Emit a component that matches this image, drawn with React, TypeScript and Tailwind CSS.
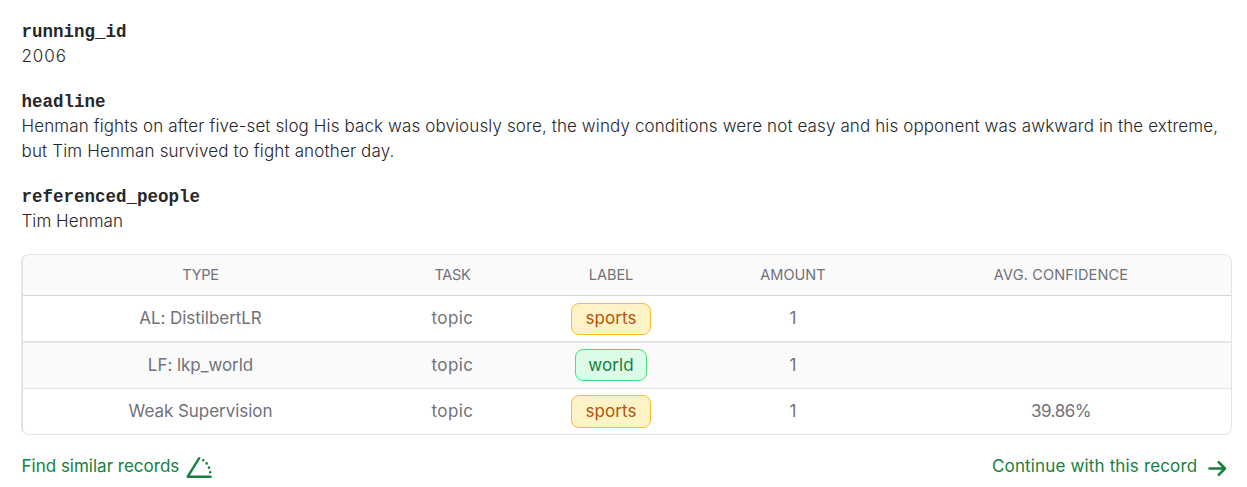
import React from 'react';

interface Field {
  name: string;
  lines: { text: string; className: string }[];
}

interface Row {
  type: string;
  label: string;
  labelClass: string;
  confidence?: string;
  rowClass: string;
}

const fields: Field[] = [
  { name: 'running_id', lines: [{ text: '2006', className: 'tracking-[0.9px]' }] },
  {
    name: 'headline',
    lines: [
      {
        text: 'Henman fights on after five-set slog His back was obviously sore, the windy conditions were not easy and his opponent was awkward in the extreme,',
        className: 'tracking-[0.115px]',
      },
      { text: 'but Tim Henman survived to fight another day.', className: 'tracking-[0.15px]' },
    ],
  },
  { name: 'referenced_people', lines: [{ text: 'Tim Henman', className: 'tracking-[0.05px]' }] },
];

const rows: Row[] = [
  {
    type: 'AL: DistilbertLR',
    label: 'sports',
    labelClass: 'h-8 w-20 border-[#fbbf24] bg-[#fef3c7] text-[#b45309]',
    rowClass: 'h-[47px] border-b-2 bg-white',
  },
  {
    type: 'LF: lkp_world',
    label: 'world',
    labelClass: 'mb-px h-8 w-[72px] border-[#4ade80] bg-[#dcfce7] text-[#15803d]',
    rowClass: 'h-[46px] border-b bg-[#fafafa]',
  },
  {
    type: 'Weak Supervision',
    label: 'sports',
    labelClass: 'h-[33px] w-20 border-[#fbbf24] bg-[#fef3c7] text-[#b45309]',
    confidence: '39.86%',
    rowClass: 'h-[45px] bg-white',
  },
];

const columns = 'grid grid-cols-[355px_149px_168px_196px_340px] items-center justify-items-center';

const App: React.FC = () => {
  return (
    <div className="h-[487px] w-[1247px] overflow-hidden bg-white pt-[19px] pr-[15px] pl-[21px] font-['Inter',sans-serif] text-[17px] leading-[25px] font-light text-[#27272a]">
      {fields.map((field) => (
        <div key={field.name} className="mb-5 pl-[0.5px]">
          <div className="h-[25px] pt-px font-['Liberation_Mono',monospace] text-[17.5px] leading-[25px] font-bold">{field.name}</div>
          {field.lines.map((line) => (
            <p key={line.text} className={`whitespace-nowrap ${line.className}`}>{line.text}</p>
          ))}
        </div>
      ))}

      <div className="overflow-hidden rounded-lg border border-l-2 border-[#e4e4e7] font-normal text-[#71717a]">
        <div className={`${columns} h-[41px] border-b border-[#d4d4d8] bg-[#fafafa] pb-[2px] text-[14.5px]`}>
          <span className="-tracking-[0.3px]">TYPE</span>
          <span className="-tracking-[0.3px]">TASK</span>
          <span>LABEL</span>
          <span>AMOUNT</span>
          <span className="tracking-[0.15px]">AVG. CONFIDENCE</span>
        </div>
        {rows.map((row) => (
          <div key={row.type} className={`${columns} border-[#e4e4e7] ${row.rowClass}`}>
            <span className="-tracking-[0.05px]">{row.type}</span>
            <span className="tracking-[0.4px]">topic</span>
            <span className={`flex items-center justify-center rounded-lg border tracking-[0.1px] ${row.labelClass}`}>{row.label}</span>
            <span>1</span>
            <span className="-tracking-[0.45px]">{row.confidence}</span>
          </div>
        ))}
      </div>

      <div className="mt-[19px] flex items-center justify-between font-normal text-[#15803d]">
        <a className="flex items-center">
          <span className="w-[165px] pl-[0.5px] whitespace-nowrap">Find similar records</span>
          <svg className="h-[25px] w-[26px]" viewBox="0 0 26 25" fill="none" stroke="currentColor" strokeWidth="2.4" strokeLinecap="round" strokeLinejoin="round">
            <path d="M13.2 4.2L1.7 22.7H24.6" />
            <path d="M17.3 6.3h.01M20.6 9.4h.01M23 13.6h.01M24.2 18.2h.01" strokeWidth="2.6" />
          </svg>
        </a>
        <a className="flex items-center">
          <span className="w-[215px] whitespace-nowrap tracking-[0.15px]">Continue with this record</span>
          <svg className="mr-[5px] h-5 w-5" viewBox="0 0 20 20" fill="none" stroke="currentColor" strokeWidth="2.5" strokeLinecap="round" strokeLinejoin="round">
            <path d="M2.5 11.5H18M11.7 5.2L18 11.5l-6.3 6.3" />
          </svg>
        </a>
      </div>
    </div>
  );
};

export default App;
